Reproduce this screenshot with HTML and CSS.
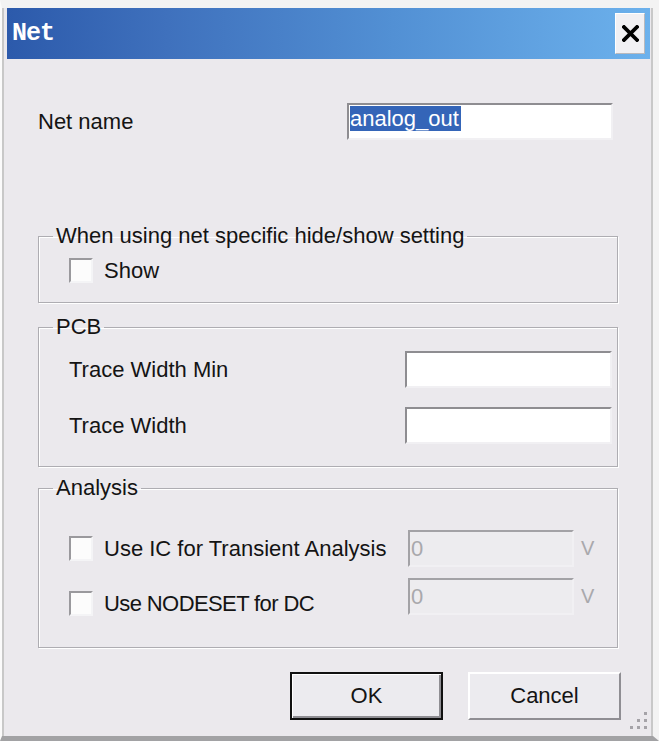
FILE: index.html
```html
<html>
<head>
    <title>Net</title>
    <link rel="stylesheet" href="styles.css">
</head>
<body>

<div class="window">

    <div class="titlebar">
        <span class="title">Net</span>
        <div class="close">
            <svg width="17" height="17" viewBox="0 0 17 17">
                <path d="M2 2 L15 15 M15 2 L2 15" stroke="#000" stroke-width="3.8" stroke-linecap="square"/>
            </svg>
        </div>
    </div>

    <div class="content">

        <div class="name-row">
            <label>Net name</label>
            <div class="textbox name-box"><span class="selected">analog_out</span></div>
        </div>

        <fieldset class="group show-group">
            <legend>When using net specific hide/show setting</legend>
            <div class="group-body">
                <div class="check-row">
                    <span class="checkbox"></span>
                    <span>Show</span>
                </div>
            </div>
        </fieldset>

        <fieldset class="group pcb-group">
            <legend>PCB</legend>
            <div class="group-body">
                <div class="field-row">
                    <label>Trace Width Min</label>
                    <div class="textbox field-box"></div>
                </div>
                <div class="field-row">
                    <label>Trace Width</label>
                    <div class="textbox field-box"></div>
                </div>
            </div>
        </fieldset>

        <fieldset class="group analysis-group">
            <legend>Analysis</legend>
            <div class="group-body">
                <div class="analysis-row">
                    <div class="check-row wide">
                        <span class="checkbox"></span>
                        <span>Use IC for Transient Analysis</span>
                    </div>
                    <div class="textbox disabled">0</div>
                    <span class="unit">V</span>
                </div>
                <div class="analysis-row">
                    <div class="check-row wide low">
                        <span class="checkbox"></span>
                        <span class="tight">Use NODESET for DC</span>
                    </div>
                    <div class="textbox disabled">0</div>
                    <span class="unit">V</span>
                </div>
            </div>
        </fieldset>

        <div class="buttons">
            <button class="default">OK</button>
            <button>Cancel</button>
        </div>

    </div>

    <!-- size grip in the corner -->
    <svg class="grip" width="21" height="21" viewBox="0 0 21 21">
        <rect x="17" y="3" width="3" height="3" fill="#a5a3a8"/>
        <rect x="10" y="10" width="3" height="3" fill="#a5a3a8"/>
        <rect x="17" y="10" width="3" height="3" fill="#a5a3a8"/>
        <rect x="3" y="17" width="3" height="3" fill="#a5a3a8"/>
        <rect x="10" y="17" width="3" height="3" fill="#a5a3a8"/>
        <rect x="17" y="17" width="3" height="3" fill="#a5a3a8"/>
    </svg>

</div>

</body>
</html>
```

FILE: styles.css
```css
body
{
    margin: 0;
    background-color: #f4f4f4;
    font-family: 'Liberation Sans', Arial, sans-serif;
    font-size: 22px;
    color: #141414;
}

.window
{
    position: relative;
    width: 659px;
    height: 741px;
    box-sizing: border-box;
    background-color: #ebe9ed;
    border-top: 8px solid #f3f3f3;
    border-left: 2px solid #fbfbfb;
    border-right: 6px solid #f3f3f3;
    border-bottom: 5px solid #a2a2a4;
    box-shadow: inset 2px 0 0 #c8c8c8, inset -2px 0 0 #c8c8c8;
}

.titlebar
{
    margin: 0 3px 0 5px;
    height: 51px;
    display: flex;
    align-items: center;
    justify-content: space-between;
    padding: 0 5px 0 5px;
    background: linear-gradient(to right, #2c5aab, #3f71bd 25%, #5290d4 60%, #6cb1ec);
}

.title
{
    font-family: 'Liberation Mono', monospace;
    font-weight: bold;
    font-size: 25px;
    color: #fff;
    letter-spacing: -1px;
}

.close
{
    width: 30px;
    height: 41px;
    box-sizing: border-box;
    display: flex;
    align-items: center;
    justify-content: center;
    background-color: #f1f0f3;
    border-top: 1px solid #fff;
    border-left: 1px solid #fff;
    border-right: 1px solid #b9b9bd;
    border-bottom: 1px solid #b9b9bd;
}

.content
{
    padding: 0 32px 0 36px;
}

label
{
    line-height: 25px;
}

.name-row
{
    margin: 44px 8px 0 0;
    display: flex;
    align-items: center;
    justify-content: space-between;
}

.textbox
{
    box-sizing: border-box;
    height: 37px;
    background-color: #fff;
    border-top: 2px solid #8e8d91;
    border-left: 2px solid #8e8d91;
    border-right: 2px solid #f1f0f3;
    border-bottom: 2px solid #f1f0f3;
    line-height: 33px;
    padding-left: 1px;
}

.name-box
{
    width: 266px;
    padding-top: 2px;
    line-height: 24px;
}

.selected
{
    background-color: #3465b8;
    color: #fff;
    padding-right: 2px;
}

.field-box
{
    width: 207px;
}

.disabled
{
    width: 166px;
    background-color: #edecef;
    color: #a9a8ac;
    border-top-color: #a3a2a6;
    border-left-color: #a3a2a6;
}

.unit
{
    margin-left: 7px;
    color: #a9a8ac;
    font-size: 20px;
}

.group
{
    margin: 0 3px 0 0;
    padding: 0;
    min-width: 0;
    border: 1px solid #aeadb2;
    box-shadow: 1px 1px 0 #fff, inset 1px 1px 0 #fff;
}

.group legend
{
    margin-left: 14px;
    padding: 0 3px;
    line-height: 24px;
}

.show-group
{
    margin-top: 84px;
}

.show-group .group-body
{
    padding: 10px 0 19px 30px;
}

.pcb-group
{
    margin-top: 12px;
}

.pcb-group .group-body
{
    padding: 12px 5px 22px 30px;
    display: flex;
    flex-direction: column;
    gap: 19px;
}

.field-row
{
    display: flex;
    align-items: center;
    justify-content: space-between;
}

.analysis-group
{
    margin-top: 9px;
}

.analysis-group .group-body
{
    padding: 30px 0 32px 30px;
    display: flex;
    flex-direction: column;
    gap: 11px;
}

.analysis-row
{
    display: flex;
    align-items: center;
}

.check-row
{
    display: flex;
    align-items: center;
    gap: 11px;
    height: 25px;
    line-height: 25px;
}

.wide
{
    flex: 0 0 339px;
}

.low
{
    align-self: flex-end;
    margin-bottom: -1px;
}

.tight
{
    letter-spacing: -0.6px;
}

.checkbox
{
    width: 24px;
    height: 25px;
    box-sizing: border-box;
    background-color: #fcfcfc;
    border-top: 2px solid #9a999d;
    border-left: 2px solid #9a999d;
    border-right: 2px solid #f4f4f6;
    border-bottom: 2px solid #f4f4f6;
}

.buttons
{
    margin-top: 24px;
    display: flex;
    justify-content: flex-end;
    gap: 25px;
}

button
{
    width: 153px;
    height: 48px;
    box-sizing: border-box;
    font-family: 'Liberation Sans', Arial, sans-serif;
    font-size: 22px;
    color: #141414;
    background-color: #ecebef;
    border-top: 2px solid #fff;
    border-left: 2px solid #fff;
    border-right: 2px solid #8f8e93;
    border-bottom: 2px solid #8f8e93;
}

button.default
{
    border: 2px solid #111;
    box-shadow: inset 1px 1px 0 #fff, inset -2px -2px 0 #8f8e93;
}

.grip
{
    position: absolute;
    right: 5px;
    bottom: 6px;
}
```
